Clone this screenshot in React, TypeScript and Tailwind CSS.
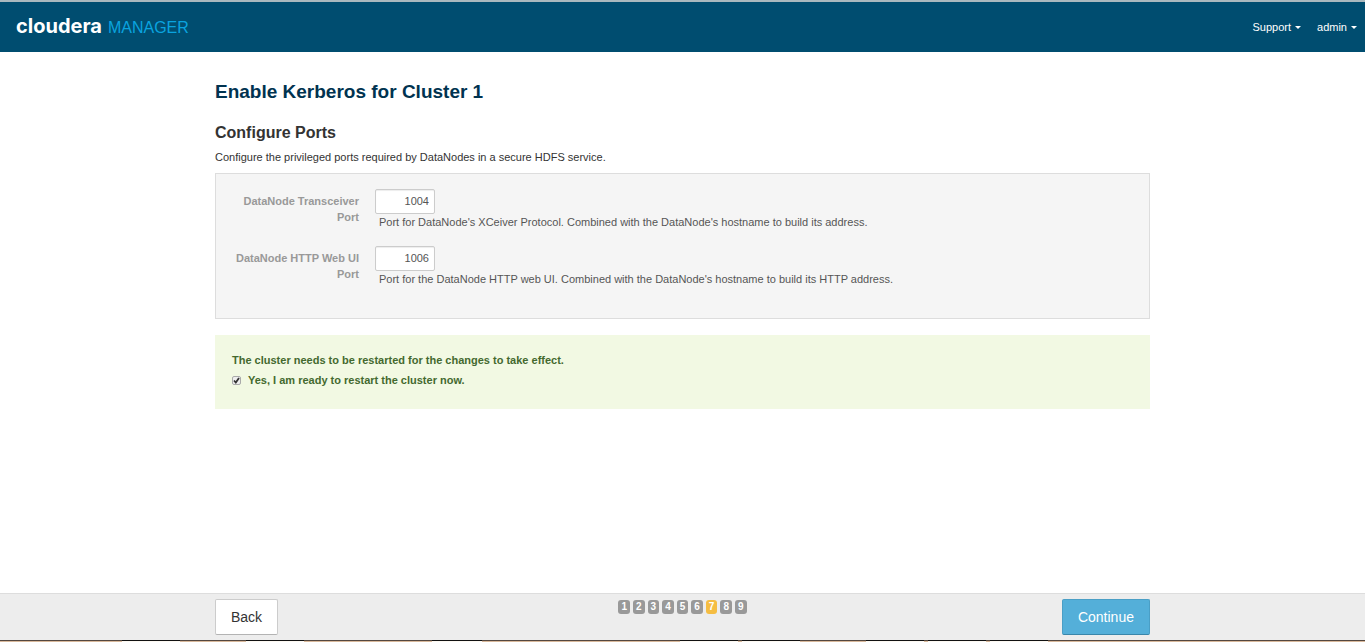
import { useState } from "react";

const ports = [
  {
    id: "transceiver-port",
    label: "DataNode Transceiver Port",
    value: "1004",
    help: "Port for DataNode's XCeiver Protocol. Combined with the DataNode's hostname to build its address.",
  },
  {
    id: "http-port",
    label: "DataNode HTTP Web UI Port",
    value: "1006",
    help: "Port for the DataNode HTTP web UI. Combined with the DataNode's hostname to build its HTTP address.",
  },
];

const steps = [1, 2, 3, 4, 5, 6, 7, 8, 9];
const currentStep = 7;

// Relative widths of the alternating tan and light window tabs.
const tabs = [122, 58, 66, 58, 128, 50, 198, 58, 4, 58, 66, 58, 4, 58, 4, 58, 317];

function Caret() {
  return (
    <svg width="6" height="3" viewBox="0 0 6 3" fill="currentColor" aria-hidden="true">
      <path d="M0 0h6L3 3z" />
    </svg>
  );
}

function Header() {
  return (
    <header className="flex h-[52px] items-center justify-between border-t-2 border-[#a9b8be] bg-[#004d70] pl-4 pr-2">
      <a href="#home" className="flex items-baseline gap-[6px]">
        <span className="font-['Inter',sans-serif] text-[20px] font-bold leading-7 text-white">cloudera</span>
        <span className="font-['Liberation_Sans',sans-serif] text-[16px] leading-7 text-[#0aa3df]">MANAGER</span>
      </a>
      <nav className="flex gap-4 text-white">
        <button type="button" className="flex items-center gap-1">
          Support <Caret />
        </button>
        <button type="button" className="flex items-center gap-1">
          admin <Caret />
        </button>
      </nav>
    </header>
  );
}

function PortField({ id, label, value, help }: (typeof ports)[number]) {
  const [port, setPort] = useState(value);
  return (
    <div className="flex gap-4">
      <label htmlFor={id} className="w-32 shrink-0 pt-1 text-right font-bold text-[#999999]">
        {label}
      </label>
      <div>
        <input
          id={id}
          type="text"
          value={port}
          onChange={(e) => setPort(e.target.value)}
          className="block h-[25px] w-[60px] rounded-xs border border-[#cccccc] bg-white px-[5px] pb-[2px] text-right text-[#555555] shadow-[inset_0_1px_1px_rgba(0,0,0,0.075)]"
        />
        <p className="pl-1 text-[#555555]">{help}</p>
      </div>
    </div>
  );
}

export default function App() {
  const [ready, setReady] = useState(true);
  return (
    <div className="flex min-h-screen flex-col bg-white font-['Liberation_Sans',Arial,sans-serif] text-[11px] leading-4 text-[#333333]">
      <Header />
      <main className="mx-auto w-full max-w-[935px] flex-1 pt-7">
        <h1 className="text-[19px] font-bold leading-[23px] text-[#003350]">Enable Kerberos for Cluster 1</h1>
        <h2 className="mt-[18px] text-[16px] font-bold leading-6">Configure Ports</h2>
        <p className="mt-1">Configure the privileged ports required by DataNodes in a secure HDFS service.</p>
        <section className="mt-2 flex flex-col gap-4 border border-[#dddddd] bg-[#f5f5f5] px-[15px] pb-[31px] pt-[15px]">
          {ports.map((p) => (
            <PortField key={p.id} {...p} />
          ))}
        </section>
        <section className="mt-4 bg-[#f2f9e3] px-[17px] pb-5 pt-[17px] font-bold text-[#44692f]">
          <p>The cluster needs to be restarted for the changes to take effect.</p>
          <label className="mt-1 flex items-center gap-[7px] pb-[1px]">
            <span className="grid size-[9px]">
              <input
                type="checkbox"
                checked={ready}
                onChange={(e) => setReady(e.target.checked)}
                className="col-start-1 row-start-1 size-[9px] appearance-none rounded-xs border border-[#aaaaaa] bg-[#eeeeee]"
              />
              {ready && (
                <svg
                  viewBox="0 0 9 9"
                  className="pointer-events-none col-start-1 row-start-1 size-[9px]"
                  fill="none"
                  stroke="#333333"
                  strokeWidth="1.8"
                  aria-hidden="true"
                >
                  <path d="M2 4.5 3.8 6.5 7 2" />
                </svg>
              )}
            </span>
            Yes, I am ready to restart the cluster now.
          </label>
        </section>
      </main>
      <footer className="bg-[#ededed]">
        <div className="border-t border-[#dddddd] pb-[5px] pt-[5px]">
          <div className="mx-auto grid max-w-[935px] grid-cols-3 items-start">
            <button
              type="button"
              className="h-9 justify-self-start rounded-xs border border-[#cccccc] border-b-[#b3b3b3] bg-white px-[15px] text-[14px]"
            >
              Back
            </button>
            <ol className="flex gap-[3px] justify-self-center pt-[1px] text-[10px] font-bold leading-[14px] text-white">
              {steps.map((n) => (
                <li
                  key={n}
                  className={
                    n === currentStep
                      ? "rounded-[3px] bg-[#f5bd42] px-[3px]"
                      : "rounded-[3px] bg-[#999999] px-[3px]"
                  }
                >
                  {n}
                </li>
              ))}
            </ol>
            <button
              type="button"
              className="h-9 justify-self-end rounded-xs border border-[#4a9fc6] border-b-[#3a86aa] bg-[#54afd9] px-[15px] text-[14px] text-white"
            >
              Continue
            </button>
          </div>
        </div>
        <div className="flex h-[2px] overflow-hidden" aria-hidden="true">
          {tabs.map((width, i) => (
            <span
              key={i}
              style={{ flexGrow: width }}
              className={
                i % 2 === 0
                  ? "border-t border-[#54473f] bg-[#d9b99b]"
                  : "border-t border-[#111111] bg-[#fdf9f2]"
              }
            />
          ))}
        </div>
      </footer>
    </div>
  );
}
